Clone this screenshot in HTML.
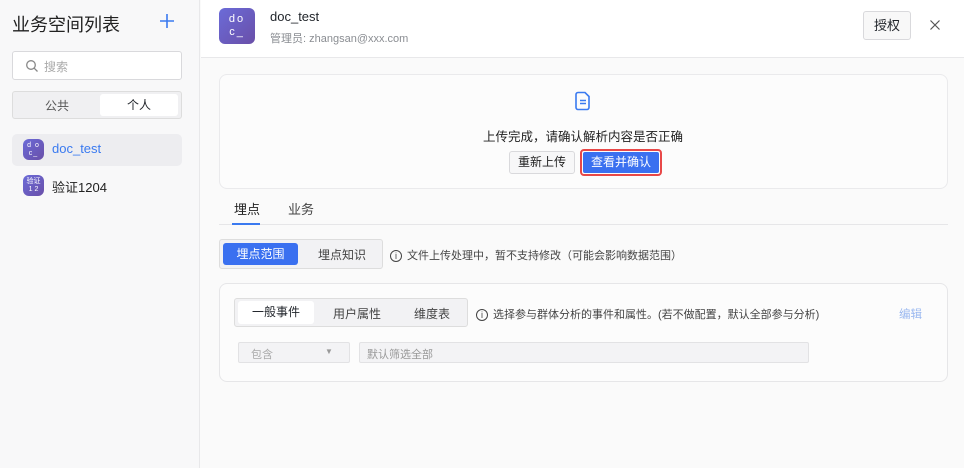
<!DOCTYPE html>
<html><head><meta charset="utf-8"><style>
*{box-sizing:border-box;margin:0;padding:0}
body{width:964px;height:468px;overflow:hidden;background:#fafafa;font-family:"Liberation Sans","Noto Sans CJK SC",sans-serif;position:relative;color:#1f2329}
.abs{position:absolute}
.side{left:0;top:0;width:200px;height:468px;background:#f8f8f9;border-right:1px solid #e8e8ea}
.av{border-radius:6px;background:linear-gradient(135deg,#6b6bd8,#6a4fa8);color:#fff;text-align:center;font-family:"Liberation Sans","Noto Sans CJK SC",sans-serif}
.btn{border:1px solid #d9d9dc;background:#f7f7f8;border-radius:3px;font-size:12px;text-align:center}
.info{display:inline-block;width:12px;height:12px;border:1px solid #444;border-radius:50%;font-size:9px;line-height:10px;text-align:center;vertical-align:middle;margin-right:5px}
</style></head><body>
<div class="abs side">
 <div class="abs" style="left:12px;top:11px;font-size:18px;color:#222">业务空间列表</div>
 <svg class="abs" style="left:160px;top:14px" width="14" height="14" viewBox="0 0 14 14"><path d="M7 0v14M0 7h14" stroke="#3a7af0" stroke-width="1.6"/></svg>
 <div class="abs" style="left:12px;top:51px;width:170px;height:29px;border:1px solid #d9d9dc;border-radius:3px;background:#fff">
  <svg class="abs" style="left:12px;top:7px" width="14" height="14" viewBox="0 0 14 14"><circle cx="6" cy="6" r="4.3" fill="none" stroke="#888" stroke-width="1.3"/><path d="M9.2 9.2 L12.5 12.5" stroke="#888" stroke-width="1.3"/></svg>
  <span class="abs" style="left:31px;top:6px;font-size:12px;color:#aaa">搜索</span></div>
 <div class="abs" style="left:12px;top:91px;width:170px;height:28px;border:1px solid #ddd;border-radius:3px;background:#f0f0f2">
  <span class="abs" style="left:32px;top:5px;font-size:12px;color:#555">公共</span>
  <div class="abs" style="left:87px;top:2px;width:78px;height:22px;background:#fff;border-radius:3px;text-align:center;font-size:12px;line-height:22px">个人</div></div>
 <div class="abs" style="left:12px;top:134px;width:170px;height:32px;background:#ededf0;border-radius:5px"></div>
 <div class="abs av" style="left:23px;top:139px;width:21px;height:21px;font-size:7px;line-height:8px;padding-top:3px;letter-spacing:1px">d o<br>c_</div>
 <div class="abs" style="left:52px;top:141px;font-size:13px;color:#3a7af0">doc_test</div>
 <div class="abs av" style="left:23px;top:175px;width:21px;height:21px;font-size:7px;line-height:8px;padding-top:3px">验证<br>1 2</div>
 <div class="abs" style="left:52px;top:177px;font-size:13px;color:#222">验证1204</div>
</div>
<div class="abs" style="left:201px;top:0;width:763px;height:58px;border-bottom:1px solid #e8e8ea;background:#fff"></div>
<div class="abs av" style="left:219px;top:8px;width:36px;height:36px;font-size:11px;line-height:13px;padding-top:5px;letter-spacing:2px">do<br>c_</div>
<div class="abs" style="left:270px;top:9px;font-size:13px">doc_test</div>
<div class="abs" style="left:270px;top:30px;font-size:11px;color:#8a8d92">管理员: zhangsan@xxx.com</div>
<div class="abs btn" style="left:863px;top:11px;width:48px;height:29px;line-height:27px;font-size:13px;background:#f8f8f8">授权</div>
<svg class="abs" style="left:930px;top:20px" width="10" height="10" viewBox="0 0 10 10"><path d="M0.5 0.5l9 9M9.5 0.5l-9 9" stroke="#555" stroke-width="1.2"/></svg>
<div class="abs" style="left:219px;top:74px;width:729px;height:115px;border:1px solid #eaeaec;border-radius:8px;background:#fcfcfc"></div>
<svg class="abs" style="left:575px;top:91px" width="16" height="20" viewBox="0 0 16 20"><path d="M3 1.5h7l4 4v11a2 2 0 0 1-2 2H3a2 2 0 0 1-2-2v-13a2 2 0 0 1 2-2z" fill="none" stroke="#3a7af0" stroke-width="1.6"/><path d="M5 9.5h6M5 12.5h6" stroke="#3a7af0" stroke-width="1.5"/></svg>
<div class="abs" style="left:483px;top:126px;font-size:12.5px;color:#222">上传完成，请确认解析内容是否正确</div>
<div class="abs btn" style="left:509px;top:151px;width:66px;height:23px;line-height:21px;color:#222">重新上传</div>
<div class="abs" style="left:580px;top:149px;width:82px;height:27px;border:2px solid #e84848;border-radius:4px;padding:1px"><div style="background:#3a70f0;color:#fff;font-size:12px;text-align:center;height:21px;line-height:21px;border-radius:2px">查看并确认</div></div>
<div class="abs" style="left:234px;top:199px;font-size:13px;color:#222">埋点</div>
<div class="abs" style="left:288px;top:199px;font-size:13px;color:#444">业务</div>
<div class="abs" style="left:219px;top:224px;width:729px;height:1px;background:#e6e6e8"></div>
<div class="abs" style="left:232px;top:223px;width:28px;height:2px;background:#3a7af0"></div>
<div class="abs" style="left:219px;top:239px;width:164px;height:30px;border:1px solid #ddd;border-radius:3px;background:#f2f2f4"></div>
<div class="abs" style="left:223px;top:243px;width:75px;height:22px;background:#3a70f0;border-radius:3px;color:#fff;font-size:12px;text-align:center;line-height:22px">埋点范围</div>
<div class="abs" style="left:318px;top:246px;font-size:12px;color:#444">埋点知识</div>
<div class="abs" style="left:390px;top:247px;font-size:11px;color:#444"><span class="info">i</span>文件上传处理中，暂不支持修改（可能会影响数据范围）</div>
<div class="abs" style="left:219px;top:283px;width:729px;height:99px;border:1px solid #e6e6e8;border-radius:8px;background:#fcfcfc"></div>
<div class="abs" style="left:234px;top:298px;width:234px;height:29px;border:1px solid #ddd;border-radius:3px;background:#f2f2f4"></div>
<div class="abs" style="left:238px;top:301px;width:76px;height:23px;background:#fff;border-radius:3px;font-size:12px;text-align:center;line-height:23px">一般事件</div>
<div class="abs" style="left:333px;top:305px;font-size:12px;color:#444">用户属性</div>
<div class="abs" style="left:414px;top:305px;font-size:12px;color:#444">维度表</div>
<div class="abs" style="left:476px;top:306px;font-size:11px;color:#444"><span class="info">i</span>选择参与群体分析的事件和属性。(若不做配置，默认全部参与分析)</div>
<div class="abs" style="left:899px;top:306px;font-size:11.5px;color:#9ab8f0">编辑</div>
<div class="abs" style="left:238px;top:342px;width:112px;height:21px;border:1px solid #e2e2e4;border-radius:2px;background:#f3f3f5;font-size:11px;color:#aaa;padding:3px 0 0 12px">包含<span class="abs" style="left:86px;top:4px;font-size:8px;color:#999">▼</span></div>
<div class="abs" style="left:359px;top:342px;width:450px;height:21px;border:1px solid #e2e2e4;border-radius:2px;background:#f3f3f5;font-size:11px;color:#999;padding:3px 0 0 7px">默认筛选全部</div>
</body></html>
